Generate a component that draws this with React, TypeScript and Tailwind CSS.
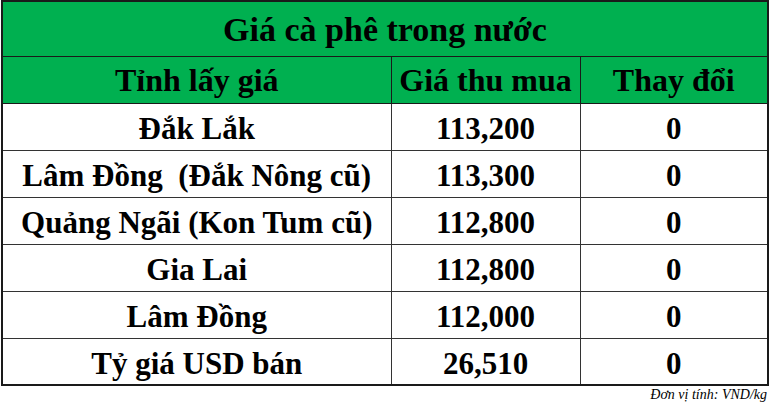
const rows = [
  { name: "Đắk Lắk", price: "113,200", change: "0" },
  { name: "Lâm Đồng  (Đắk Nông cũ)", price: "113,300", change: "0" },
  { name: "Quảng Ngãi (Kon Tum cũ)", price: "112,800", change: "0" },
  { name: "Gia Lai", price: "112,800", change: "0" },
  { name: "Lâm Đồng", price: "112,000", change: "0" },
  { name: "Tỷ giá USD bán", price: "26,510", change: "0" },
];

const serif = "font-['Liberation_Serif','Times_New_Roman',serif]";
const cell = `${serif} border border-[#333] pt-[4px] text-center text-[31px] font-bold leading-none`;
const head = `${serif} border border-[#1a1a1a] text-center font-bold leading-none`;

export default function App() {
  return (
    <div className={`h-[414px] w-[770px] bg-white px-[1px] text-black ${serif}`}>
      <table className="w-[768px] table-fixed border-collapse border-2 border-[#1a1a1a]">
        <colgroup>
          <col className="w-[389px]" />
          <col className="w-[189px]" />
          <col className="w-[188px]" />
        </colgroup>
        <thead>
          <tr className="h-[55px] bg-[#00b050]">
            <th colSpan={3} className={`${head} pt-[2px] text-[34px]`}>
              Giá cà phê trong nước
            </th>
          </tr>
          <tr className="h-[47px] bg-[#00b050]">
            <th className={`${head} text-[32px]`}>Tỉnh lấy giá</th>
            <th className={`${head} text-[32px]`}>Giá thu mua</th>
            <th className={`${head} text-[32px]`}>Thay đổi</th>
          </tr>
        </thead>
        <tbody>
          {rows.map((row) => (
            <tr key={row.name} className="h-[47px]">
              <td className={`whitespace-pre ${cell}`}>{row.name}</td>
              <td className={cell}>{row.price}</td>
              <td className={cell}>{row.change}</td>
            </tr>
          ))}
        </tbody>
      </table>
      <p className={`${serif} mt-[2px] pr-[2px] text-right text-[14px] italic leading-none`}>Đơn vị tính: VND/kg</p>
    </div>
  );
}
